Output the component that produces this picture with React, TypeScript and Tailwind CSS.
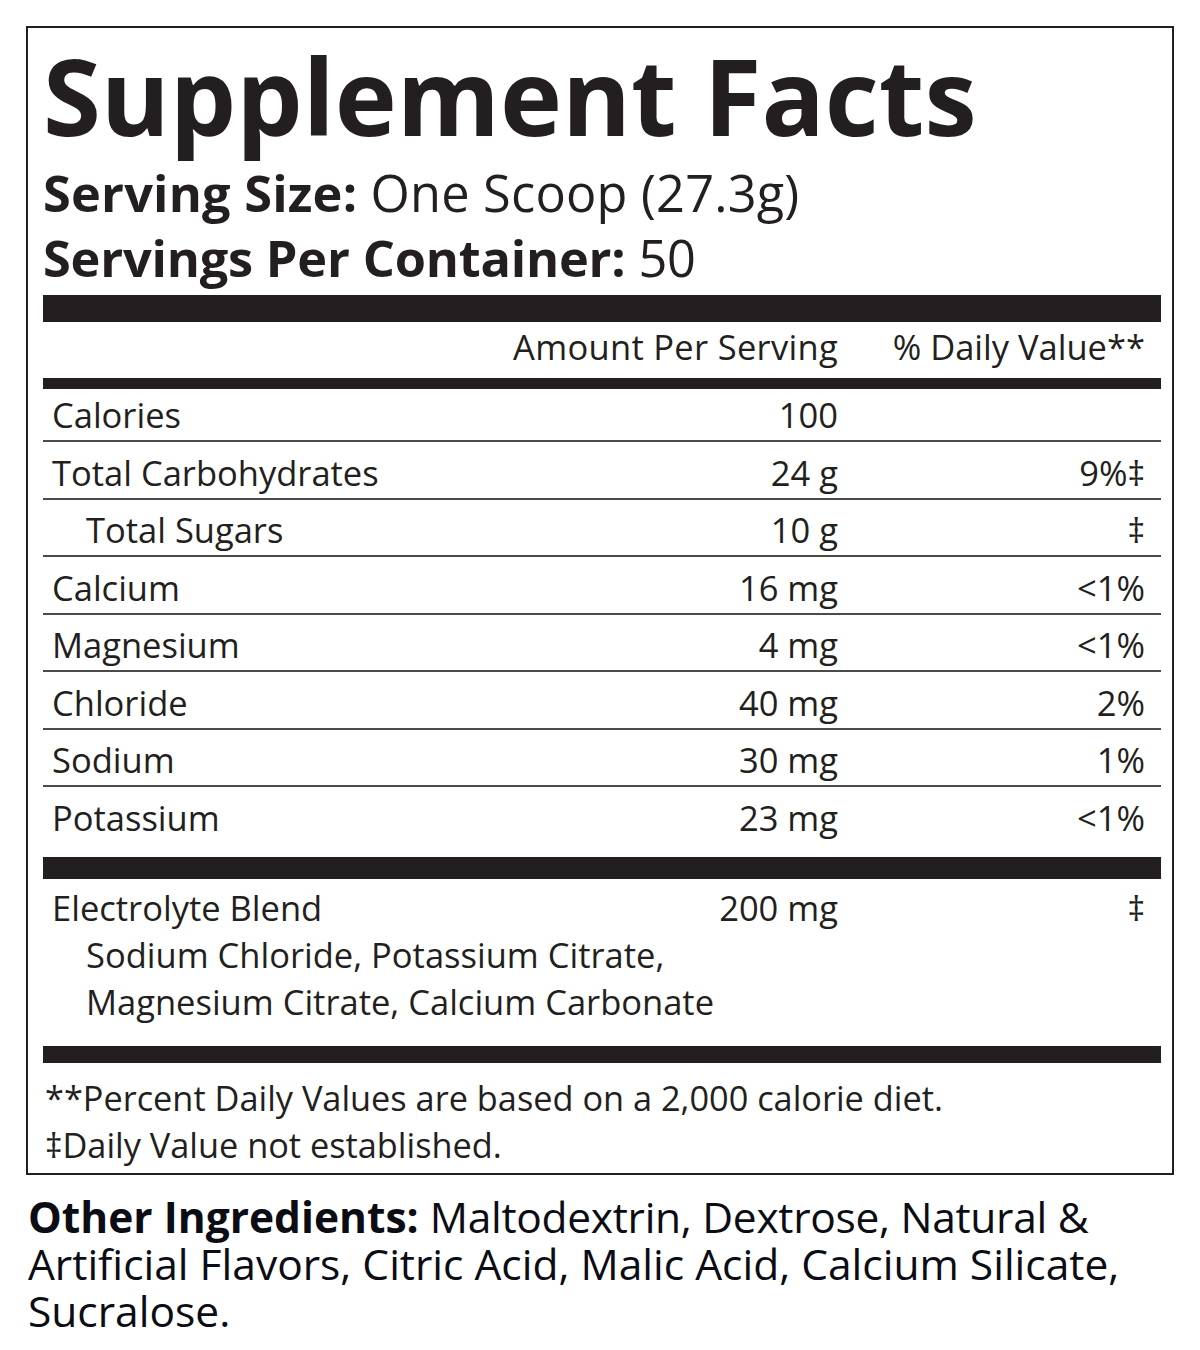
const font = { fontFamily: '"Open Sans", "Noto Sans", sans-serif' }

type Row = {
  label: string
  amount: string
  dv: string
  indent?: boolean
}

const rows: Row[] = [
  { label: "Total Carbohydrates", amount: "24 g", dv: "9%‡" },
  { label: "Total Sugars", amount: "10 g", dv: "‡", indent: true },
  { label: "Calcium", amount: "16 mg", dv: "<1%" },
  { label: "Magnesium", amount: "4 mg", dv: "<1%" },
  { label: "Chloride", amount: "40 mg", dv: "2%" },
  { label: "Sodium", amount: "30 mg", dv: "1%" },
  { label: "Potassium", amount: "23 mg", dv: "<1%" },
]

function FactRow({ label, amount, dv, indent }: Row) {
  return (
    <div className="flex h-[55.5px] pt-[4.5px] text-[34.5px] leading-[51px]">
      <div className={indent ? "flex-1 pl-[43px]" : "flex-1 pl-[9px]"}>{label}</div>
      <div className="w-[240px] text-right">{amount}</div>
      <div className="w-[323px] pr-[16px] text-right">{dv}</div>
    </div>
  )
}

export default function App() {
  return (
    <div className="w-[1200px] h-[1350px] bg-white pt-[26px] pl-[26px]" style={font}>
      {/* Facts panel */}
      <div className="w-[1148px] border-2 border-[#231f20] pl-[15px] pr-[11px] pt-[4px] pb-[5px] text-[#231f20]">
        <h1 className="text-[105px] font-bold leading-[128px]">Supplement Facts</h1>
        <div className="text-[50.5px] leading-[65px]">
          <p className="tracking-[0.2px]">
            <span className="font-bold">Serving Size:</span> One Scoop (27.3g)
          </p>
          <p className="tracking-[-0.2px]">
            <span className="font-bold">Servings Per Container:</span> 50
          </p>
        </div>

        <div className="mt-[5px] h-[27px] bg-[#231f20]" />

        <div className="flex h-[56px] text-[34.5px] leading-[50px]">
          <div className="flex-1" />
          <div className="w-[340px] text-right tracking-[0.3px]">Amount Per Serving</div>
          <div className="w-[323px] pr-[16px] text-right">% Daily Value**</div>
        </div>

        <div className="h-[11px] bg-[#231f20]" />

        <div className="flex h-[51px] text-[34.5px] leading-[51px]">
          <div className="flex-1 pl-[9px]">Calories</div>
          <div className="w-[240px] text-right">100</div>
          <div className="w-[323px]" />
        </div>

        {rows.map((row) => (
          <div key={row.label}>
            <div className="h-[2px] bg-[#4d4a4b]" />
            <FactRow {...row} />
          </div>
        ))}

        <div className="mt-[14.5px] h-[22px] bg-[#231f20]" />

        {/* Proprietary blend */}
        <div className="pt-[5.3px] text-[34.5px] leading-[47px]">
          <div className="flex">
            <div className="flex-1 pl-[9px]">Electrolyte Blend</div>
            <div className="w-[240px] text-right">200 mg</div>
            <div className="w-[323px] pr-[16px] text-right">‡</div>
          </div>
          <p className="pl-[43px]">Sodium Chloride, Potassium Citrate,</p>
          <p className="pl-[43px]">Magnesium Citrate, Calcium Carbonate</p>
        </div>

        <div className="mt-[20.7px] h-[17px] bg-[#231f20]" />

        <div className="mt-[11.3px] pl-[2px] text-[34.3px] leading-[47px]">
          <p>**Percent Daily Values are based on a 2,000 calorie diet.</p>
          <p>‡Daily Value not established.</p>
        </div>
      </div>

      {/* Other ingredients */}
      <p className="mt-[18px] ml-[2px] w-[1150px] text-[42.5px] leading-[47px] text-[#0b0c14]">
        <span className="font-bold">Other Ingredients:</span>{" "}
        <span className="tracking-[-0.3px]">Maltodextrin, Dextrose, Natural &amp;</span>
        <br />
        Artificial Flavors, Citric Acid, Malic Acid, Calcium Silicate,
        <br />
        Sucralose.
      </p>
    </div>
  )
}
